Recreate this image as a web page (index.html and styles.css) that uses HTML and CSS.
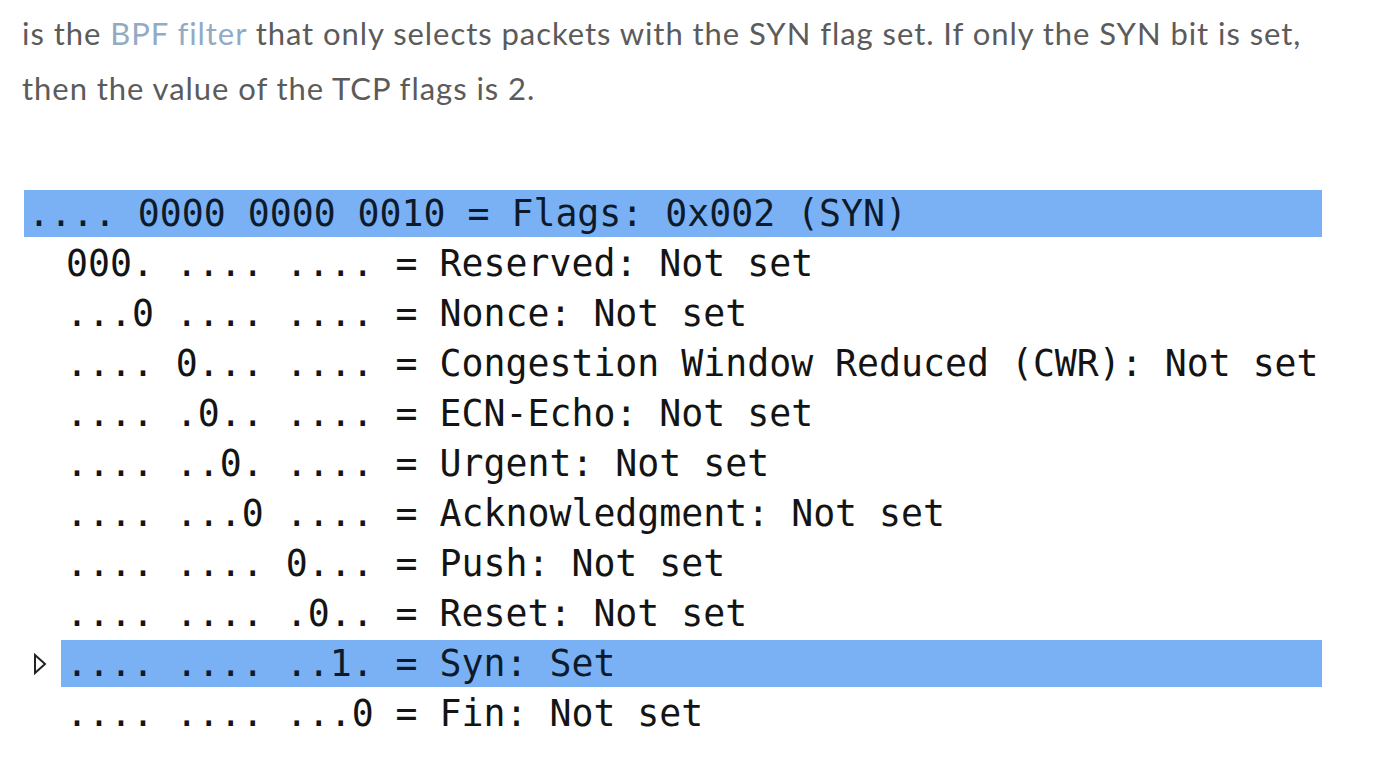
FILE: index.html
```html
<!DOCTYPE html>
<html>
<head>
<meta charset="utf-8">
<link rel="stylesheet" href="styles.css">
</head>
<body>
<p class="intro">is the <a class="link" href="#">BPF filter</a> that only selects packets with the SYN flag set. If only the SYN bit is set,<br>then the value of the TCP flags is 2.</p>
<div class="tree">
  <div class="row top"><span class="cell hl">.... 0000 0000 0010 = Flags: 0x002 (SYN)</span></div>
  <div class="row child"><span class="gutter"></span><span class="cell">000. .... .... = Reserved: Not set</span></div>
  <div class="row child"><span class="gutter"></span><span class="cell">...0 .... .... = Nonce: Not set</span></div>
  <div class="row child"><span class="gutter"></span><span class="cell">.... 0... .... = Congestion Window Reduced (CWR): Not set</span></div>
  <div class="row child"><span class="gutter"></span><span class="cell">.... .0.. .... = ECN-Echo: Not set</span></div>
  <div class="row child"><span class="gutter"></span><span class="cell">.... ..0. .... = Urgent: Not set</span></div>
  <div class="row child"><span class="gutter"></span><span class="cell">.... ...0 .... = Acknowledgment: Not set</span></div>
  <div class="row child"><span class="gutter"></span><span class="cell">.... .... 0... = Push: Not set</span></div>
  <div class="row child"><span class="gutter"></span><span class="cell">.... .... .0.. = Reset: Not set</span></div>
  <div class="row child"><span class="gutter"><svg class="tri" width="14" height="22" viewBox="0 0 14 22"><path d="M2 2 L12 11 L2 20 Z" fill="none" stroke="#222" stroke-width="2" stroke-linejoin="miter"/></svg></span><span class="cell hl">.... .... ..1. = Syn: Set</span></div>
  <div class="row child"><span class="gutter"></span><span class="cell">.... .... ...0 = Fin: Not set</span></div>
</div>
</body>
</html>
```
FILE: styles.css
```css
html, body {
  margin: 0;
  padding: 0;
  background: #ffffff;
}
.intro {
  margin: 0;
  padding: 6px 0 0 22px;
  font-family: Lato, "Open Sans", sans-serif;
  font-size: 31px;
  letter-spacing: 0.95px;
  line-height: 55px;
  color: #5b5b5b;
}
.link {
  color: #93aac4;
  text-decoration: none;
}
.tree {
  margin: 74px 0 0 24px;
  width: 1298px;
  font-family: "DejaVu Sans Mono", monospace;
  font-size: 36.5px;
  color: #141414;
}
.row {
  display: flex;
  height: 47px;
  margin-bottom: 3px;
  line-height: 47px;
}
.gutter {
  flex: 0 0 37px;
  display: flex;
  align-items: center;
  padding-left: 9px;
  box-sizing: border-box;
}
.cell {
  flex: 1;
  white-space: pre;
  padding-left: 4px;
}
.child .cell {
  padding-left: 5px;
}
.hl {
  background: #7ab1f5;
  color: #0e1a2a;
}
.tri {
  display: block;
}
```
